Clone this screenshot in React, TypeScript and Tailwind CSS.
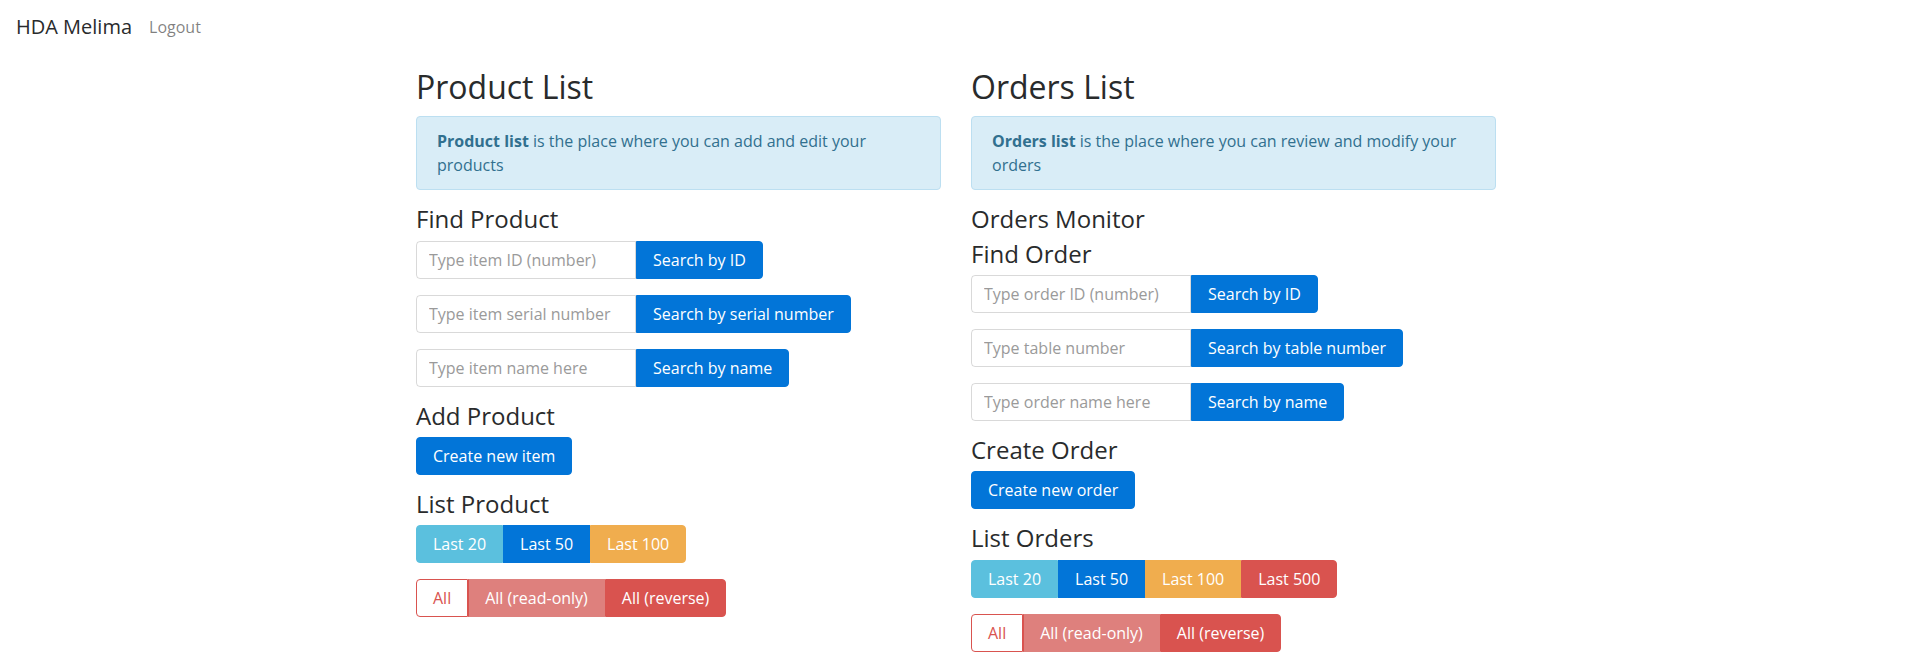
import React from "react";

const btnBase =
  "inline-flex items-center justify-center px-4 py-2 text-base leading-[1.25] border text-white whitespace-nowrap";

function SearchRow({ placeholder, label }: { placeholder: string; label: string }) {
  return (
    <div className="flex mb-4">
      <input
        className="w-[220px] h-[38px] px-3 py-2 text-base leading-[1.25] border border-[rgba(0,0,0,0.15)] rounded-l-[4px] text-[#464a4c] placeholder:text-[#9a9a9a] outline-none"
        placeholder={placeholder}
      />
      <button className={`${btnBase} bg-[#0275d8] border-[#0275d8] rounded-r-[4px]`}>{label}</button>
    </div>
  );
}

function H1({ children }: { children: React.ReactNode }) {
  return <h1 className="text-[32px] leading-[1.1] font-normal mb-3">{children}</h1>;
}

function H3({ children }: { children: React.ReactNode }) {
  return <h3 className="text-[24px] leading-[1.1] font-normal mb-2">{children}</h3>;
}

function AllGroup() {
  return (
    <div className="flex mb-4">
      <button className="inline-flex items-center justify-center px-4 py-2 text-base leading-[1.25] border border-[#d9534f] bg-white text-[#d9534f] rounded-l-[4px]">
        All
      </button>
      <button className={`${btnBase} bg-[#de807d] border-[#de807d] border-l-[#d9534f]`}>All (read-only)</button>
      <button className={`${btnBase} bg-[#d9534f] border-[#d9534f] rounded-r-[4px]`}>All (reverse)</button>
    </div>
  );
}

export default function App() {
  return (
    <div className="min-h-screen bg-white text-[#292b2c] text-base leading-normal font-['Open_Sans','Noto_Sans',sans-serif]">
      <nav className="flex items-center px-4 py-2">
        <a className="text-[20px] leading-[1.5] py-1 mr-4 text-[#292b2c]">HDA Melima</a>
        <a className="text-base leading-normal text-[rgba(0,0,0,0.5)] ml-px">Logout</a>
      </nav>
      <main className="flex gap-[30px] pl-[416px] pt-[15px]">
        <section className="w-[525px]">
          <H1>Product List</H1>
          <div className="mb-4 px-5 py-3 border border-[#bcdff1] bg-[#d9edf7] text-[#31708f] rounded-[4px]">
            <strong className="font-bold">Product list</strong> is the place where you can add and edit your products
          </div>
          <H3>Find Product</H3>
          <SearchRow placeholder="Type item ID (number)" label="Search by ID" />
          <SearchRow placeholder="Type item serial number" label="Search by serial number" />
          <SearchRow placeholder="Type item name here" label="Search by name" />
          <H3>Add Product</H3>
          <div className="mb-4">
            <button className={`${btnBase} bg-[#0275d8] border-[#0275d8] rounded-[4px]`}>Create new item</button>
          </div>
          <H3>List Product</H3>
          <div className="flex mb-4">
            <button className={`${btnBase} bg-[#5bc0de] border-[#5bc0de] rounded-l-[4px]`}>Last 20</button>
            <button className={`${btnBase} bg-[#0275d8] border-[#0275d8]`}>Last 50</button>
            <button className={`${btnBase} bg-[#f0ad4e] border-[#f0ad4e] rounded-r-[4px]`}>Last 100</button>
          </div>
          <AllGroup />
        </section>
        <section className="w-[525px]">
          <H1>Orders List</H1>
          <div className="mb-4 px-5 py-3 border border-[#bcdff1] bg-[#d9edf7] text-[#31708f] rounded-[4px]">
            <strong className="font-bold">Orders list</strong> is the place where you can review and modify your orders
          </div>
          <H3>Orders Monitor</H3>
          <H3>Find Order</H3>
          <SearchRow placeholder="Type order ID (number)" label="Search by ID" />
          <SearchRow placeholder="Type table number" label="Search by table number" />
          <SearchRow placeholder="Type order name here" label="Search by name" />
          <H3>Create Order</H3>
          <div className="mb-4">
            <button className={`${btnBase} bg-[#0275d8] border-[#0275d8] rounded-[4px]`}>Create new order</button>
          </div>
          <H3>List Orders</H3>
          <div className="flex mb-4">
            <button className={`${btnBase} bg-[#5bc0de] border-[#5bc0de] rounded-l-[4px]`}>Last 20</button>
            <button className={`${btnBase} bg-[#0275d8] border-[#0275d8]`}>Last 50</button>
            <button className={`${btnBase} bg-[#f0ad4e] border-[#f0ad4e]`}>Last 100</button>
            <button className={`${btnBase} bg-[#d9534f] border-[#d9534f] rounded-r-[4px]`}>Last 500</button>
          </div>
          <AllGroup />
        </section>
      </main>
    </div>
  );
}
